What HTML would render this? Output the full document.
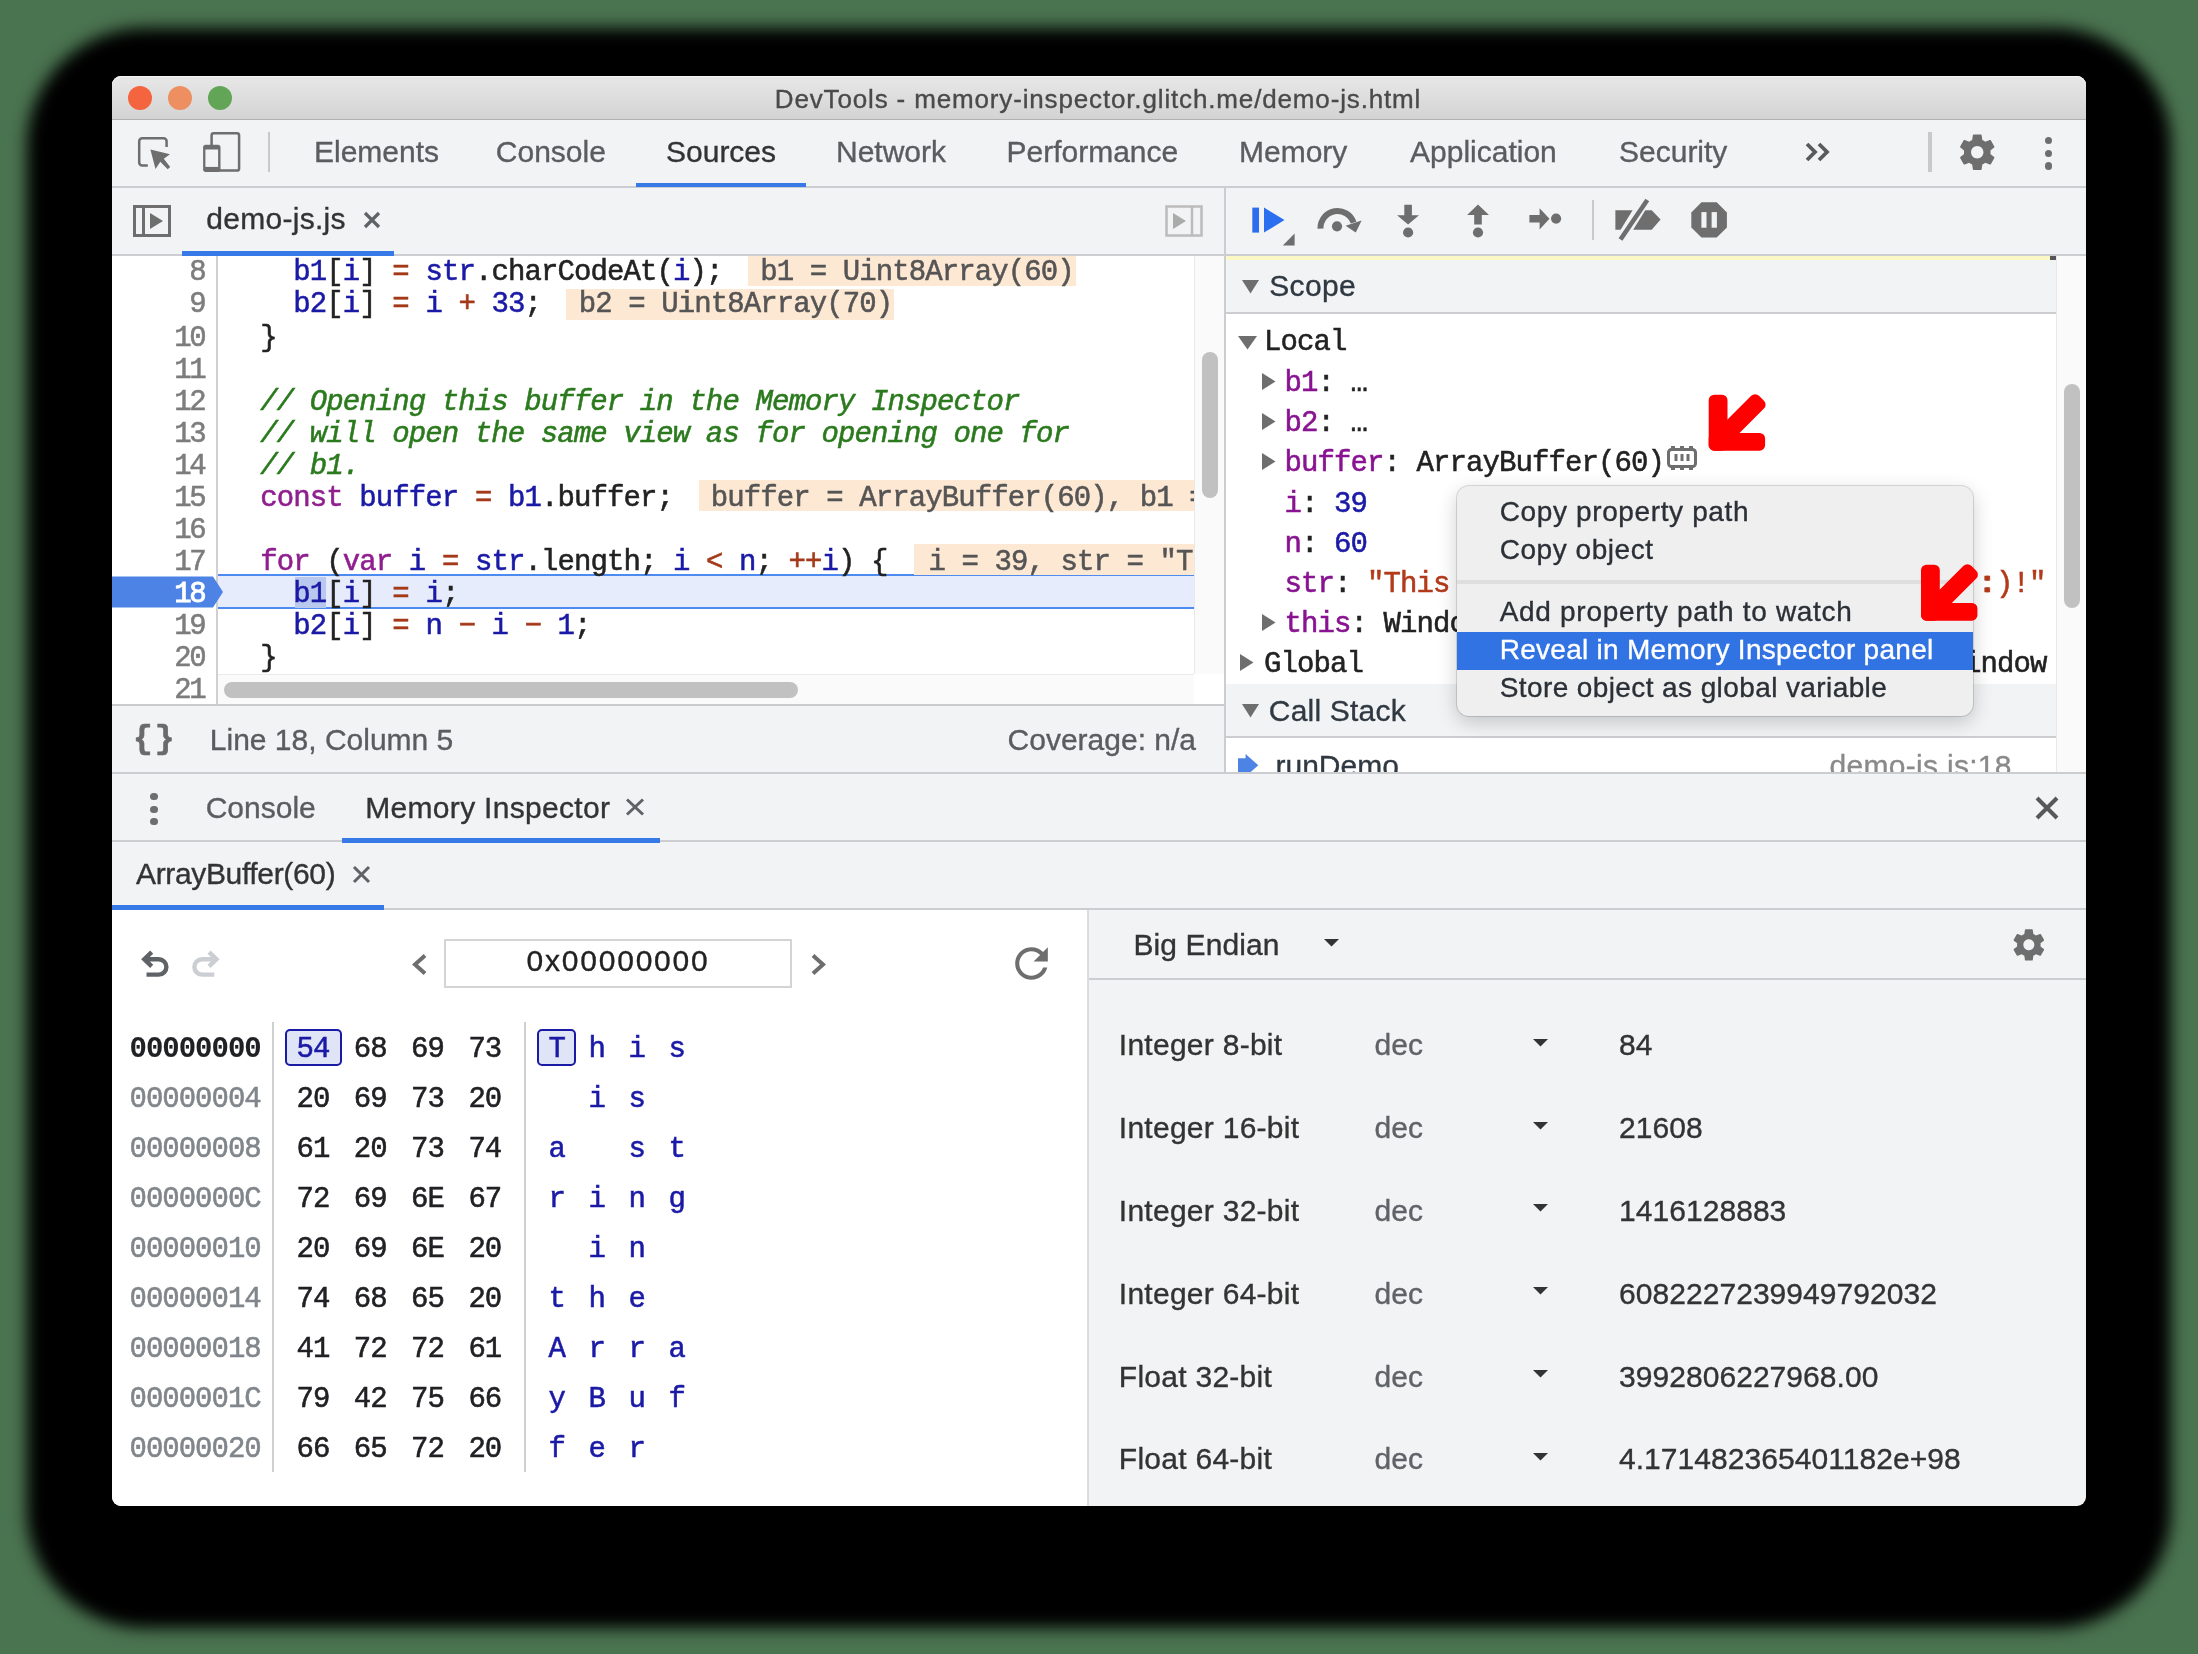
<!DOCTYPE html>
<html><head><meta charset="utf-8"><title>DevTools</title>
<style>
html,body{margin:0;padding:0;background:#4a7350;}
body{width:2198px;height:1654px;overflow:hidden;background:#4a7350;position:relative;font-family:"Liberation Sans", sans-serif;}
div,svg{position:absolute;box-sizing:border-box;}
svg{overflow:visible;}
.ts{font-family:"Liberation Sans", sans-serif;white-space:pre;-webkit-text-stroke:0.35px;}
.tm{font-family:"Liberation Mono", monospace;white-space:pre;-webkit-text-stroke:0.55px;}
</style></head><body><div id="root" style="left:0;top:0;width:2198px;height:1654px;will-change:transform;">
<div style="left:27px;top:28px;width:2144px;height:1599.5px;background:#000;border-radius:118px;filter:blur(8px);"></div>
<div style="left:112px;top:76px;width:1974px;height:1430px;background:#f1f3f4;border-radius:9px;"></div>
<div style="left:112px;top:76px;width:1974px;height:44px;border-radius:9px 9px 0 0;background:linear-gradient(#e8e8e8,#d3d3d3);border-bottom:1px solid #b0b0b0;box-shadow:inset 0 1px 0 #f4f4f4;"></div>
<div style="left:128px;top:86px;width:24px;height:24px;border-radius:50%;background:#f4643f;"></div>
<div style="left:168px;top:86px;width:24px;height:24px;border-radius:50%;background:#ed8f60;"></div>
<div style="left:208px;top:86px;width:24px;height:24px;border-radius:50%;background:#63a557;"></div>
<div class="ts" style="top:85.90px;font-size:26px;line-height:26px;color:#4a4a4a;left:0.00px;letter-spacing:0.85px;left:111px;width:1974px;text-align:center;">DevTools - memory-inspector.glitch.me/demo-js.html</div>
<div style="left:112px;top:186px;width:1974px;height:2px;background:#cbcdd1;"></div>
<svg style="left:126px;top:124px;" width="60" height="60" viewBox="0 0 60 60"><path d="M166.6 146.9V141.3a3 3 0 0 0-3-3H142.2a3 3 0 0 0-3 3v21.3a3 3 0 0 0 3 3h5.6" fill="none" stroke="#6e6e6e" stroke-width="2.5" transform="translate(-126 -124)"/><path d="M150.4 149.5L170 154.3l-6.2 4.4 6.4 8.2-2.5 2.4-7.4-7.5-4.8 7.3z" fill="#6e6e6e" transform="translate(-126 -124)"/></svg>
<svg style="left:126px;top:124px;" width="120" height="60" viewBox="0 0 120 60"><g transform="translate(-126 -124)"><rect x="211.6" y="133.2" width="27.5" height="37.4" rx="2.2" fill="none" stroke="#6e6e6e" stroke-width="2.5"/><rect x="203.1" y="144.7" width="17.4" height="27.2" rx="2.6" fill="#6e6e6e"/><rect x="205.4" y="149.5" width="12.7" height="17.4" fill="#f1f3f4"/></g></svg>
<div style="left:268px;top:132px;width:2px;height:40px;background:#c9c9c9;"></div>
<div class="ts" style="top:137.00px;font-size:30px;line-height:30px;color:#5a5c5f;left:314.00px;">Elements</div>
<div class="ts" style="top:137.00px;font-size:30px;line-height:30px;color:#5a5c5f;left:495.80px;">Console</div>
<div class="ts" style="top:137.00px;font-size:30px;line-height:30px;color:#333;left:666.00px;">Sources</div>
<div class="ts" style="top:137.00px;font-size:30px;line-height:30px;color:#5a5c5f;left:836.00px;">Network</div>
<div class="ts" style="top:137.00px;font-size:30px;line-height:30px;color:#5a5c5f;left:1006.50px;">Performance</div>
<div class="ts" style="top:137.00px;font-size:30px;line-height:30px;color:#5a5c5f;left:1239.00px;">Memory</div>
<div class="ts" style="top:137.00px;font-size:30px;line-height:30px;color:#5a5c5f;left:1410.00px;">Application</div>
<div class="ts" style="top:137.00px;font-size:30px;line-height:30px;color:#5a5c5f;left:1619.00px;">Security</div>
<div style="left:636px;top:183px;width:170px;height:4px;background:#3879e8;"></div>
<svg style="left:1804px;top:142px;" width="28" height="20" viewBox="0 0 28 20"><path d="M3 2l8 8-8 8M15 2l8 8-8 8" fill="none" stroke="#5a5a5a" stroke-width="3.8"/></svg>
<div style="left:1928.3px;top:132px;width:3.5px;height:40px;background:#c9c9c9;"></div>
<svg style="left:1955.8px;top:130.75px;" width="42.5" height="42.5" viewBox="0 0 24 24"><path d="M19.43 12.98c.04-.32.07-.64.07-.98s-.03-.66-.07-.98l2.11-1.65c.19-.15.24-.42.12-.64l-2-3.46c-.12-.22-.39-.3-.61-.22l-2.49 1c-.52-.4-1.08-.73-1.69-.98l-.38-2.65C14.46 2.18 14.25 2 14 2h-4c-.25 0-.46.18-.49.42l-.38 2.65c-.61.25-1.17.59-1.69.98l-2.49-1c-.23-.09-.49 0-.61.22l-2 3.46c-.13.22-.07.49.12.64l2.11 1.65c-.04.32-.07.65-.07.98s.03.66.07.98l-2.11 1.65c-.19.15-.24.42-.12.64l2 3.46c.12.22.39.3.61.22l2.49-1c.52.4 1.08.73 1.69.98l.38 2.65c.03.24.24.42.49.42h4c.25 0 .46-.18.49-.42l.38-2.65c.61-.25 1.17-.59 1.69-.98l2.49 1c.23.09.49 0 .61-.22l2-3.46c.12-.22.07-.49-.12-.64l-2.11-1.65zM12 15.5c-1.93 0-3.5-1.57-3.5-3.5s1.57-3.5 3.5-3.5 3.5 1.57 3.5 3.5-1.57 3.5-3.5 3.5z" fill="#6e6e6e"/></svg>
<div style="left:2044.8px;top:136.70000000000002px;width:7.4px;height:7.4px;border-radius:50%;background:#6e6e6e;"></div>
<div style="left:2044.8px;top:149.70000000000002px;width:7.4px;height:7.4px;border-radius:50%;background:#6e6e6e;"></div>
<div style="left:2044.8px;top:162.3px;width:7.4px;height:7.4px;border-radius:50%;background:#6e6e6e;"></div>
<svg style="left:133px;top:205px;" width="38" height="32" viewBox="0 0 38 32"><rect x="1.5" y="1.5" width="35" height="29" fill="none" stroke="#6e6e6e" stroke-width="3"/><path d="M10.5 1.5v29" stroke="#6e6e6e" stroke-width="3"/><path d="M17 8l13 8-13 8z" fill="#6e6e6e"/></svg>
<div class="ts" style="top:204.30px;font-size:30px;line-height:30px;color:#333;left:206.20px;letter-spacing:0.3px;">demo-js.js</div>
<svg style="left:363.5px;top:212px;" width="16" height="16" viewBox="0 0 16 16"><path d="M1 1l14 14M15 1L1 15" stroke="#5f6368" stroke-width="3.2"/></svg>
<div style="left:112px;top:254px;width:1114px;height:2px;background:#cbcdd1;"></div>
<div style="left:182px;top:251px;width:212px;height:4.6px;background:#3879e8;"></div>
<svg style="left:1165px;top:205px;" width="38" height="32" viewBox="0 0 38 32"><rect x="1.5" y="1.5" width="35" height="29" fill="none" stroke="#bcbcbc" stroke-width="2.5"/><path d="M27 1.5v29" stroke="#bcbcbc" stroke-width="2.5"/><path d="M8 8l13 8-13 8z" fill="#ababab"/></svg>
<div style="left:112px;top:256px;width:1114px;height:448px;background:#fff;overflow:hidden;">
<div style="left:104px;top:0px;width:2px;height:448px;background:#d0d0d0;"></div>
<div style="left:106px;top:318.20000000000005px;width:1000px;height:35.3px;background:#e6ecfb;border-top:2px solid #4d8bf0;border-bottom:2px solid #4d8bf0;"></div>
<div style="left:182.5px;top:320.70000000000005px;width:31.5px;height:31px;background:#b8c8ee;"></div>
<svg style="left:0;top:319px" width="114" height="34" viewBox="0 0 114 34"><path d="M0 1.5h101l10 15.5-10 15.5H0z" fill="#4d83e4"/></svg>
<div style="left:636px;top:-1.4000000000000057px;width:328px;height:31px;background:#fde8d4;"></div>
<div style="left:454px;top:32.60000000000002px;width:328px;height:31px;background:#fde8d4;"></div>
<div style="left:587px;top:224.39999999999998px;width:520px;height:31px;background:#fde8d4;"></div>
<div style="left:802px;top:288.29999999999995px;width:300px;height:31px;background:#fde8d4;"></div>
<div class="tm" style="left:77.35px;top:1.76px;font-size:29px;line-height:29px;color:#7d7d7d;letter-spacing:-2.400px;">8</div>
<div class="tm" style="left:77.35px;top:33.76px;font-size:29px;line-height:29px;color:#7d7d7d;letter-spacing:-2.400px;">9</div>
<div class="tm" style="left:62.35px;top:67.76px;font-size:29px;line-height:29px;color:#7d7d7d;letter-spacing:-2.400px;">10</div>
<div class="tm" style="left:62.35px;top:99.76px;font-size:29px;line-height:29px;color:#7d7d7d;letter-spacing:-2.400px;">11</div>
<div class="tm" style="left:62.35px;top:131.76px;font-size:29px;line-height:29px;color:#7d7d7d;letter-spacing:-2.400px;">12</div>
<div class="tm" style="left:62.35px;top:163.76px;font-size:29px;line-height:29px;color:#7d7d7d;letter-spacing:-2.400px;">13</div>
<div class="tm" style="left:62.35px;top:195.76px;font-size:29px;line-height:29px;color:#7d7d7d;letter-spacing:-2.400px;">14</div>
<div class="tm" style="left:62.35px;top:227.76px;font-size:29px;line-height:29px;color:#7d7d7d;letter-spacing:-2.400px;">15</div>
<div class="tm" style="left:62.35px;top:259.76px;font-size:29px;line-height:29px;color:#7d7d7d;letter-spacing:-2.400px;">16</div>
<div class="tm" style="left:62.35px;top:291.76px;font-size:29px;line-height:29px;color:#7d7d7d;letter-spacing:-2.400px;">17</div>
<div class="tm" style="left:62.35px;top:323.76px;font-size:29px;line-height:29px;color:#fff;letter-spacing:-2.400px;-webkit-text-stroke:0.9px;">18</div>
<div class="tm" style="left:62.35px;top:355.76px;font-size:29px;line-height:29px;color:#7d7d7d;letter-spacing:-2.400px;">19</div>
<div class="tm" style="left:62.35px;top:387.76px;font-size:29px;line-height:29px;color:#7d7d7d;letter-spacing:-2.400px;">20</div>
<div class="tm" style="left:62.35px;top:419.76px;font-size:29px;line-height:29px;color:#7d7d7d;letter-spacing:-2.400px;">21</div>
<div class="tm" style="left:181.30px;top:1.76px;font-size:29px;line-height:29px;color:#222;letter-spacing:-0.900px;"><span style="color:#1a1aa6">b1</span><span style="color:#222">[</span><span style="color:#1a1aa6">i</span><span style="color:#222">] </span><span style="color:#a53a1a">=</span><span style="color:#222"> </span><span style="color:#1a1aa6">str</span><span style="color:#222">.charCodeAt(</span><span style="color:#1a1aa6">i</span><span style="color:#222">);</span></div>
<div class="tm" style="left:648.25px;top:1.76px;font-size:29px;line-height:29px;color:#555;letter-spacing:-0.900px;">b1 = Uint8Array(60)</div>
<div class="tm" style="left:181.30px;top:33.76px;font-size:29px;line-height:29px;color:#222;letter-spacing:-0.900px;"><span style="color:#1a1aa6">b2</span><span style="color:#222">[</span><span style="color:#1a1aa6">i</span><span style="color:#222">] </span><span style="color:#a53a1a">=</span><span style="color:#222"> </span><span style="color:#1a1aa6">i</span><span style="color:#222"> </span><span style="color:#a53a1a">+</span><span style="color:#222"> </span><span style="color:#1a1aa6">33</span><span style="color:#222">;</span></div>
<div class="tm" style="left:466.75px;top:33.76px;font-size:29px;line-height:29px;color:#555;letter-spacing:-0.900px;">b2 = Uint8Array(70)</div>
<div class="tm" style="left:148.30px;top:67.76px;font-size:29px;line-height:29px;color:#222;letter-spacing:-0.900px;"><span style="color:#222">}</span></div>
<div class="tm" style="left:148.30px;top:131.76px;font-size:29px;line-height:29px;color:#2b7a1e;letter-spacing:-0.900px;font-style:italic;">// Opening this buffer in the Memory Inspector</div>
<div class="tm" style="left:148.30px;top:163.76px;font-size:29px;line-height:29px;color:#2b7a1e;letter-spacing:-0.900px;font-style:italic;">// will open the same view as for opening one for</div>
<div class="tm" style="left:148.30px;top:195.76px;font-size:29px;line-height:29px;color:#2b7a1e;letter-spacing:-0.900px;font-style:italic;">// b1.</div>
<div class="tm" style="left:148.30px;top:227.76px;font-size:29px;line-height:29px;color:#222;letter-spacing:-0.900px;"><span style="color:#8f1f8f">const</span><span style="color:#222"> </span><span style="color:#1a1aa6">buffer</span><span style="color:#222"> </span><span style="color:#a53a1a">=</span><span style="color:#222"> </span><span style="color:#1a1aa6">b1</span><span style="color:#222">.buffer;</span></div>
<div class="tm" style="left:598.75px;top:227.76px;font-size:29px;line-height:29px;color:#555;letter-spacing:-0.900px;">buffer = ArrayBuffer(60), b1 =</div>
<div class="tm" style="left:148.30px;top:291.76px;font-size:29px;line-height:29px;color:#222;letter-spacing:-0.900px;"><span style="color:#8f1f8f">for</span><span style="color:#222"> (</span><span style="color:#8f1f8f">var</span><span style="color:#222"> </span><span style="color:#1a1aa6">i</span><span style="color:#222"> </span><span style="color:#a53a1a">=</span><span style="color:#222"> </span><span style="color:#1a1aa6">str</span><span style="color:#222">.length; </span><span style="color:#1a1aa6">i</span><span style="color:#222"> </span><span style="color:#a53a1a">&lt;</span><span style="color:#222"> </span><span style="color:#1a1aa6">n</span><span style="color:#222">; </span><span style="color:#a53a1a">++</span><span style="color:#1a1aa6">i</span><span style="color:#222">) {</span></div>
<div class="tm" style="left:816.55px;top:291.76px;font-size:29px;line-height:29px;color:#555;letter-spacing:-0.900px;">i = 39, str = "This</div>
<div class="tm" style="left:181.30px;top:323.76px;font-size:29px;line-height:29px;color:#222;letter-spacing:-0.900px;"><span style="color:#1a1aa6">b1</span><span style="color:#222">[</span><span style="color:#1a1aa6">i</span><span style="color:#222">] </span><span style="color:#a53a1a">=</span><span style="color:#222"> </span><span style="color:#1a1aa6">i</span><span style="color:#222">;</span></div>
<div class="tm" style="left:181.30px;top:355.76px;font-size:29px;line-height:29px;color:#222;letter-spacing:-0.900px;"><span style="color:#1a1aa6">b2</span><span style="color:#222">[</span><span style="color:#1a1aa6">i</span><span style="color:#222">] </span><span style="color:#a53a1a">=</span><span style="color:#222"> </span><span style="color:#1a1aa6">n</span><span style="color:#222"> </span><span style="color:#a53a1a">−</span><span style="color:#222"> </span><span style="color:#1a1aa6">i</span><span style="color:#222"> </span><span style="color:#a53a1a">−</span><span style="color:#222"> </span><span style="color:#1a1aa6">1</span><span style="color:#222">;</span></div>
<div class="tm" style="left:148.30px;top:387.76px;font-size:29px;line-height:29px;color:#222;letter-spacing:-0.900px;"><span style="color:#222">}</span></div>
<div style="left:106px;top:417.5px;width:977px;height:30.5px;background:#fafafa;border-top:1px solid #ebebeb;"></div>
<div style="left:112px;top:425.5px;width:574px;height:16.5px;background:#c1c1c1;border-radius:9px;"></div>
<div style="left:1082px;top:0px;width:32px;height:448px;background:#fff;"></div>
<div style="left:1082px;top:0px;width:30px;height:417.5px;background:#fafafa;border-left:1px solid #e9e9e9;"></div>
<div style="left:1089.7px;top:96px;width:16px;height:146px;background:#c1c1c1;border-radius:8px;"></div>
</div>
<div style="left:1224px;top:188px;width:2px;height:584px;background:#cbcdd1;"></div>
<div style="left:112px;top:704px;width:1112px;height:2px;background:#c9cbcd;"></div>
<div class="tm" style="top:723.42px;font-size:33px;line-height:33px;color:#6a6a6a;left:133.00px;font-weight:bold;letter-spacing:2px;">{}</div>
<div class="ts" style="top:724.80px;font-size:30px;line-height:30px;color:#5a5c5f;left:209.80px;">Line 18, Column 5</div>
<div class="ts" style="top:724.80px;font-size:30px;line-height:30px;color:#5a5c5f;right:1002.00px;">Coverage: n/a</div>
<div style="left:1226px;top:254px;width:860px;height:2px;background:#cbcdd1;"></div>
<svg style="left:1252px;top:207px;" width="44" height="40" viewBox="0 0 44 40"><rect x="0.3" y="0.6" width="6.7" height="25" fill="#2b6ff0"/><path d="M12 0.6l20.5 12.5L12 25.6z" fill="#2b6ff0"/><path d="M42.6 26.6v11.8H30.8z" fill="#6e6e6e"/></svg>
<svg style="left:1226px;top:188px;" width="860" height="68" viewBox="0 0 860 68"><g transform="translate(-1226 -188)" fill="#6e6e6e">
<path d="M1320.5 228.6A17 17 0 0 1 1353.6 222.6" fill="none" stroke="#6e6e6e" stroke-width="6"/>
<path d="M1345.6 225.8L1361.6 220.6L1355.8 232.6z"/><circle cx="1337" cy="226.3" r="5.1"/>
<path d="M1404.3 204.7h7.6v10.6h7.1L1408.1 224.6L1397.1 215.3h7.2z"/><circle cx="1408.1" cy="232.5" r="5.1"/>
<path d="M1478 204.6L1489 215h-7.2v9.6h-7.6V215h-7.1z"/><circle cx="1478" cy="232.5" r="5.1"/>
<path d="M1529.4 214.9h10.2v-6.6L1549.5 218.8L1539.6 229.6v-7H1529.4z"/><circle cx="1556.1" cy="218.6" r="5.1"/>
<path d="M1615.4 210.2h17.2L1620.6 229.8h-5.2z"/>
<path d="M1645.3 210.2h6.4l8.9 9.2l-8.9 10.4h-18.5z"/>
<path d="M1647.3 200L1620.5 239.5" fill="none" stroke="#6e6e6e" stroke-width="4.6"/>
<path d="M1701.5 202.2h15.2l10.2 10.2v15l-10.2 10.2h-15.2l-10.2-10.2v-15z"/>
<rect x="1701.4" y="212.1" width="5.1" height="15.6" fill="#f1f3f4"/><rect x="1711.6" y="212.1" width="5.3" height="15.6" fill="#f1f3f4"/>
</g></svg>
<div style="left:1592px;top:200px;width:2px;height:40px;background:#c9c9c9;"></div>
<div style="left:1226px;top:256px;width:860px;height:516px;background:#fff;overflow:hidden;">
<div style="left:0px;top:0px;width:830px;height:4px;background:#fbf8c6;"></div>
<div style="left:824px;top:0px;width:6px;height:5px;background:#555;"></div>
<div style="left:0px;top:4px;width:830px;height:52px;background:#f1f3f4;"></div>
<div style="left:0px;top:56px;width:830px;height:2px;background:#cbcdd1;"></div>
<svg style="left:15.700000000000045px;top:24px" width="17" height="13.5" viewBox="0 0 17 13.5"><path d="M0 0h17L8.5 13.5z" fill="#6e6e6e"/></svg>
<div class="ts" style="top:14.90px;font-size:30px;line-height:30px;color:#303942;left:43.30px;letter-spacing:0.3px;">Scope</div>
<svg style="left:12.299999999999955px;top:79.69999999999999px" width="19" height="13.5" viewBox="0 0 19 13.5"><path d="M0 0h19L9.5 13.5z" fill="#6e6e6e"/></svg>
<div class="tm" style="left:38.00px;top:71.96px;font-size:29px;line-height:29px;color:#222;letter-spacing:-0.900px;">Local</div>
<svg style="left:35.5px;top:116.5px" width="13.5" height="17" viewBox="0 0 13.5 17"><path d="M0 0v17L13.5 8.5z" fill="#6e6e6e"/></svg>
<div class="tm" style="left:58.50px;top:112.96px;font-size:29px;line-height:29px;color:#222;letter-spacing:-0.900px;"><span style="color:#881391">b1</span><span style="color:#222">: …</span></div>
<svg style="left:35.5px;top:156.5px" width="13.5" height="17" viewBox="0 0 13.5 17"><path d="M0 0v17L13.5 8.5z" fill="#6e6e6e"/></svg>
<div class="tm" style="left:58.50px;top:152.96px;font-size:29px;line-height:29px;color:#222;letter-spacing:-0.900px;"><span style="color:#881391">b2</span><span style="color:#222">: …</span></div>
<svg style="left:35.5px;top:197.0px" width="13.5" height="17" viewBox="0 0 13.5 17"><path d="M0 0v17L13.5 8.5z" fill="#6e6e6e"/></svg>
<div class="tm" style="left:58.50px;top:193.46px;font-size:29px;line-height:29px;color:#222;letter-spacing:-0.900px;"><span style="color:#881391">buffer</span><span style="color:#222">: ArrayBuffer(60)</span></div>
<svg style="left:441px;top:190px" width="30" height="24" viewBox="0 0 30 24"><rect x="1.5" y="3.5" width="27" height="17" rx="3" fill="none" stroke="#6e6e6e" stroke-width="3"/><path d="M9 8v7M15 8v7M21 8v7" stroke="#6e6e6e" stroke-width="3"/><path d="M6 0v3M24 0v3M6 21v3M24 21v3M15 0v3M15 21v3" stroke="#6e6e6e" stroke-width="4"/></svg>
<div class="tm" style="left:58.50px;top:233.96px;font-size:29px;line-height:29px;color:#222;letter-spacing:-0.900px;"><span style="color:#881391">i</span><span style="color:#222">: </span><span style="color:#1a1aa6">39</span></div>
<div class="tm" style="left:58.50px;top:273.96px;font-size:29px;line-height:29px;color:#222;letter-spacing:-0.900px;"><span style="color:#881391">n</span><span style="color:#222">: </span><span style="color:#1a1aa6">60</span></div>
<div class="tm" style="left:58.50px;top:313.96px;font-size:29px;line-height:29px;color:#222;letter-spacing:-0.900px;"><span style="color:#881391">str</span><span style="color:#222">: </span><span style="color:#b23a1a">"This is a string in the ArrayBuffer :)!"</span></div>
<div style="left:764px;top:309px;width:66px;height:40px;background:#fff;"></div>
<div class="tm" style="left:753.50px;top:313.96px;font-size:29px;line-height:29px;color:#b23a1a;letter-spacing:-0.900px;">:)!"</div>
<svg style="left:35.5px;top:357.5px" width="13.5" height="17" viewBox="0 0 13.5 17"><path d="M0 0v17L13.5 8.5z" fill="#6e6e6e"/></svg>
<div class="tm" style="left:58.50px;top:353.96px;font-size:29px;line-height:29px;color:#222;letter-spacing:-0.900px;"><span style="color:#881391">this</span><span style="color:#222">: Window</span></div>
<svg style="left:14px;top:397.5px" width="13.5" height="17" viewBox="0 0 13.5 17"><path d="M0 0v17L13.5 8.5z" fill="#6e6e6e"/></svg>
<div class="tm" style="left:38.00px;top:393.96px;font-size:29px;line-height:29px;color:#222;letter-spacing:-0.900px;">Global</div>
<div class="tm" style="left:721.50px;top:393.96px;font-size:29px;line-height:29px;color:#222;letter-spacing:-0.900px;">Window</div>
<div style="left:0px;top:428px;width:830px;height:52px;background:#f1f3f4;"></div>
<div style="left:0px;top:480px;width:830px;height:2px;background:#cbcdd1;"></div>
<svg style="left:15.700000000000045px;top:448px" width="17" height="13.5" viewBox="0 0 17 13.5"><path d="M0 0h17L8.5 13.5z" fill="#6e6e6e"/></svg>
<div class="ts" style="top:439.50px;font-size:30px;line-height:30px;color:#303942;left:42.80px;letter-spacing:0.2px;">Call Stack</div>
<svg style="left:0;top:0" width="860" height="516" viewBox="1226 256 860 516"><path d="M1238 758.2H1245.6V754.1L1258.3 765.3L1245.6 776.5V772.4H1238z" fill="#4d83e4"/></svg>
<div class="ts" style="top:494.60px;font-size:30px;line-height:30px;color:#303942;left:49.50px;">runDemo</div>
<div class="ts" style="top:494.60px;font-size:30px;line-height:30px;color:#8a8a8a;left:603.50px;letter-spacing:0.3px;">demo-js.js:18</div>
<div style="left:830px;top:0px;width:30px;height:516px;background:#fafafa;border-left:1px solid #e9e9e9;"></div>
<div style="left:838px;top:128.3px;width:16px;height:223.4px;background:#c1c1c1;border-radius:8px;"></div>
</div>
<div style="left:112px;top:772px;width:1974px;height:2px;background:#cbcdd1;"></div>
<div style="left:150.3px;top:792.8px;width:7.4px;height:7.4px;border-radius:50%;background:#6e6e6e;"></div>
<div style="left:150.3px;top:805.5px;width:7.4px;height:7.4px;border-radius:50%;background:#6e6e6e;"></div>
<div style="left:150.3px;top:818.0999999999999px;width:7.4px;height:7.4px;border-radius:50%;background:#6e6e6e;"></div>
<div class="ts" style="top:792.90px;font-size:30px;line-height:30px;color:#5a5c5f;left:205.70px;">Console</div>
<div class="ts" style="top:792.90px;font-size:30px;line-height:30px;color:#333;left:365.30px;letter-spacing:0.3px;">Memory Inspector</div>
<svg style="left:626px;top:799px;" width="18" height="16" viewBox="0 0 18 16"><path d="M1 0.5l16 15M17 0.5L1 15.5" stroke="#5f6368" stroke-width="3"/></svg>
<div style="left:112px;top:840px;width:1974px;height:2px;background:#cbcdd1;"></div>
<div style="left:342px;top:838px;width:318px;height:5px;background:#3879e8;"></div>
<svg style="left:2036px;top:797px;" width="22" height="22" viewBox="0 0 22 22"><path d="M1 1l20 20M21 1L1 21" stroke="#585858" stroke-width="4"/></svg>
<div class="ts" style="top:858.90px;font-size:30px;line-height:30px;color:#333;left:136.00px;letter-spacing:-0.35px;">ArrayBuffer(60)</div>
<svg style="left:353px;top:866px;" width="17" height="17" viewBox="0 0 17 17"><path d="M1 1l15 15M16 1L1 16" stroke="#5f6368" stroke-width="3"/></svg>
<div style="left:112px;top:908px;width:1974px;height:2px;background:#cbcdd1;"></div>
<div style="left:112px;top:905px;width:272px;height:5px;background:#3879e8;"></div>
<div style="left:112px;top:910px;width:975px;height:596px;background:#fff;border-radius:0 0 0 9px;"></div>
<div style="left:1087px;top:910px;width:2px;height:596px;background:#dadce0;"></div>
<svg style="left:126px;top:930px;" width="120" height="70" viewBox="0 0 120 70"><g transform="translate(-126 -930)" fill="none" stroke-width="4.4"><path d="M151.7 952.1L144.3 959.2L151.7 966.3M144.3 959.2H158.7A7.7 7.7 0 0 1 158.7 974.6H146.5" stroke="#5f6368"/><path d="M209.05 952.1L216.45 959.2L209.05 966.3M216.45 959.2H202.05A7.7 7.7 0 0 0 202.05 974.6H214.25" stroke="#cbced2"/></g></svg>
<svg style="left:411px;top:954px;" width="17" height="21" viewBox="0 0 17 21"><path d="M14 1.5L4 10.5l10 9" fill="none" stroke="#6e6e6e" stroke-width="4"/></svg>
<svg style="left:810px;top:954px;" width="17" height="21" viewBox="0 0 17 21"><path d="M3 1.5l10 9-10 9" fill="none" stroke="#6e6e6e" stroke-width="4"/></svg>
<div style="left:444px;top:938.5px;width:348px;height:49px;background:#fff;border:2px solid #d4d4d4;"></div>
<div class="ts" style="top:946.10px;font-size:30px;line-height:30px;color:#222;left:0.00px;letter-spacing:1.8px;left:444px;width:348px;text-align:center;">0x00000000</div>
<svg style="left:1007px;top:939px;" width="49" height="49" viewBox="0 0 24 24"><path d="M17.65 6.35C16.2 4.9 14.21 4 12 4c-4.42 0-7.99 3.58-7.99 8s3.57 8 7.99 8c3.73 0 6.84-2.55 7.73-6h-2.08c-.82 2.33-3.04 4-5.65 4-3.31 0-6-2.69-6-6s2.69-6 6-6c1.66 0 3.14.69 4.22 1.78L13 11h7V4l-2.35 2.35z" fill="#6e6e6e"/></svg>
<div style="left:272px;top:1022px;width:2px;height:450px;background:#cfd0d3;"></div>
<div style="left:524px;top:1022px;width:2px;height:450px;background:#cfd0d3;"></div>
<div style="left:284.5px;top:1028.5px;width:57px;height:37px;background:#dfe5f7;border:2px solid #1a1aa6;border-radius:5px;"></div>
<div style="left:536.5px;top:1028.5px;width:39px;height:37px;background:#dfe5f7;border:2px solid #1a1aa6;border-radius:5px;"></div>
<div class="tm" style="left:129.50px;top:1035.26px;font-size:29px;line-height:29px;color:#202124;letter-spacing:-1.000px;font-weight:bold;-webkit-text-stroke:0.1px;">00000000</div>
<div class="tm" style="left:296.50px;top:1035.26px;font-size:29px;line-height:29px;color:#1a1aa6;letter-spacing:-1.000px;">54</div>
<div class="tm" style="left:353.80px;top:1035.26px;font-size:29px;line-height:29px;color:#202124;letter-spacing:-1.000px;">68</div>
<div class="tm" style="left:411.10px;top:1035.26px;font-size:29px;line-height:29px;color:#202124;letter-spacing:-1.000px;">69</div>
<div class="tm" style="left:468.40px;top:1035.26px;font-size:29px;line-height:29px;color:#202124;letter-spacing:-1.000px;">73</div>
<div class="tm" style="left:548.50px;top:1035.26px;font-size:29px;line-height:29px;color:#1a1aa6;letter-spacing:-1.000px;">T</div>
<div class="tm" style="left:588.50px;top:1035.26px;font-size:29px;line-height:29px;color:#1a1aa6;letter-spacing:-1.000px;">h</div>
<div class="tm" style="left:628.50px;top:1035.26px;font-size:29px;line-height:29px;color:#1a1aa6;letter-spacing:-1.000px;">i</div>
<div class="tm" style="left:668.50px;top:1035.26px;font-size:29px;line-height:29px;color:#1a1aa6;letter-spacing:-1.000px;">s</div>
<div class="tm" style="left:129.50px;top:1085.26px;font-size:29px;line-height:29px;color:#80868b;letter-spacing:-1.000px;">00000004</div>
<div class="tm" style="left:296.50px;top:1085.26px;font-size:29px;line-height:29px;color:#202124;letter-spacing:-1.000px;">20</div>
<div class="tm" style="left:353.80px;top:1085.26px;font-size:29px;line-height:29px;color:#202124;letter-spacing:-1.000px;">69</div>
<div class="tm" style="left:411.10px;top:1085.26px;font-size:29px;line-height:29px;color:#202124;letter-spacing:-1.000px;">73</div>
<div class="tm" style="left:468.40px;top:1085.26px;font-size:29px;line-height:29px;color:#202124;letter-spacing:-1.000px;">20</div>
<div class="tm" style="left:588.50px;top:1085.26px;font-size:29px;line-height:29px;color:#1a1aa6;letter-spacing:-1.000px;">i</div>
<div class="tm" style="left:628.50px;top:1085.26px;font-size:29px;line-height:29px;color:#1a1aa6;letter-spacing:-1.000px;">s</div>
<div class="tm" style="left:129.50px;top:1135.46px;font-size:29px;line-height:29px;color:#80868b;letter-spacing:-1.000px;">00000008</div>
<div class="tm" style="left:296.50px;top:1135.46px;font-size:29px;line-height:29px;color:#202124;letter-spacing:-1.000px;">61</div>
<div class="tm" style="left:353.80px;top:1135.46px;font-size:29px;line-height:29px;color:#202124;letter-spacing:-1.000px;">20</div>
<div class="tm" style="left:411.10px;top:1135.46px;font-size:29px;line-height:29px;color:#202124;letter-spacing:-1.000px;">73</div>
<div class="tm" style="left:468.40px;top:1135.46px;font-size:29px;line-height:29px;color:#202124;letter-spacing:-1.000px;">74</div>
<div class="tm" style="left:548.50px;top:1135.46px;font-size:29px;line-height:29px;color:#1a1aa6;letter-spacing:-1.000px;">a</div>
<div class="tm" style="left:628.50px;top:1135.46px;font-size:29px;line-height:29px;color:#1a1aa6;letter-spacing:-1.000px;">s</div>
<div class="tm" style="left:668.50px;top:1135.46px;font-size:29px;line-height:29px;color:#1a1aa6;letter-spacing:-1.000px;">t</div>
<div class="tm" style="left:129.50px;top:1185.46px;font-size:29px;line-height:29px;color:#80868b;letter-spacing:-1.000px;">0000000C</div>
<div class="tm" style="left:296.50px;top:1185.46px;font-size:29px;line-height:29px;color:#202124;letter-spacing:-1.000px;">72</div>
<div class="tm" style="left:353.80px;top:1185.46px;font-size:29px;line-height:29px;color:#202124;letter-spacing:-1.000px;">69</div>
<div class="tm" style="left:411.10px;top:1185.46px;font-size:29px;line-height:29px;color:#202124;letter-spacing:-1.000px;">6E</div>
<div class="tm" style="left:468.40px;top:1185.46px;font-size:29px;line-height:29px;color:#202124;letter-spacing:-1.000px;">67</div>
<div class="tm" style="left:548.50px;top:1185.46px;font-size:29px;line-height:29px;color:#1a1aa6;letter-spacing:-1.000px;">r</div>
<div class="tm" style="left:588.50px;top:1185.46px;font-size:29px;line-height:29px;color:#1a1aa6;letter-spacing:-1.000px;">i</div>
<div class="tm" style="left:628.50px;top:1185.46px;font-size:29px;line-height:29px;color:#1a1aa6;letter-spacing:-1.000px;">n</div>
<div class="tm" style="left:668.50px;top:1185.46px;font-size:29px;line-height:29px;color:#1a1aa6;letter-spacing:-1.000px;">g</div>
<div class="tm" style="left:129.50px;top:1235.36px;font-size:29px;line-height:29px;color:#80868b;letter-spacing:-1.000px;">00000010</div>
<div class="tm" style="left:296.50px;top:1235.36px;font-size:29px;line-height:29px;color:#202124;letter-spacing:-1.000px;">20</div>
<div class="tm" style="left:353.80px;top:1235.36px;font-size:29px;line-height:29px;color:#202124;letter-spacing:-1.000px;">69</div>
<div class="tm" style="left:411.10px;top:1235.36px;font-size:29px;line-height:29px;color:#202124;letter-spacing:-1.000px;">6E</div>
<div class="tm" style="left:468.40px;top:1235.36px;font-size:29px;line-height:29px;color:#202124;letter-spacing:-1.000px;">20</div>
<div class="tm" style="left:588.50px;top:1235.36px;font-size:29px;line-height:29px;color:#1a1aa6;letter-spacing:-1.000px;">i</div>
<div class="tm" style="left:628.50px;top:1235.36px;font-size:29px;line-height:29px;color:#1a1aa6;letter-spacing:-1.000px;">n</div>
<div class="tm" style="left:129.50px;top:1285.36px;font-size:29px;line-height:29px;color:#80868b;letter-spacing:-1.000px;">00000014</div>
<div class="tm" style="left:296.50px;top:1285.36px;font-size:29px;line-height:29px;color:#202124;letter-spacing:-1.000px;">74</div>
<div class="tm" style="left:353.80px;top:1285.36px;font-size:29px;line-height:29px;color:#202124;letter-spacing:-1.000px;">68</div>
<div class="tm" style="left:411.10px;top:1285.36px;font-size:29px;line-height:29px;color:#202124;letter-spacing:-1.000px;">65</div>
<div class="tm" style="left:468.40px;top:1285.36px;font-size:29px;line-height:29px;color:#202124;letter-spacing:-1.000px;">20</div>
<div class="tm" style="left:548.50px;top:1285.36px;font-size:29px;line-height:29px;color:#1a1aa6;letter-spacing:-1.000px;">t</div>
<div class="tm" style="left:588.50px;top:1285.36px;font-size:29px;line-height:29px;color:#1a1aa6;letter-spacing:-1.000px;">h</div>
<div class="tm" style="left:628.50px;top:1285.36px;font-size:29px;line-height:29px;color:#1a1aa6;letter-spacing:-1.000px;">e</div>
<div class="tm" style="left:129.50px;top:1335.36px;font-size:29px;line-height:29px;color:#80868b;letter-spacing:-1.000px;">00000018</div>
<div class="tm" style="left:296.50px;top:1335.36px;font-size:29px;line-height:29px;color:#202124;letter-spacing:-1.000px;">41</div>
<div class="tm" style="left:353.80px;top:1335.36px;font-size:29px;line-height:29px;color:#202124;letter-spacing:-1.000px;">72</div>
<div class="tm" style="left:411.10px;top:1335.36px;font-size:29px;line-height:29px;color:#202124;letter-spacing:-1.000px;">72</div>
<div class="tm" style="left:468.40px;top:1335.36px;font-size:29px;line-height:29px;color:#202124;letter-spacing:-1.000px;">61</div>
<div class="tm" style="left:548.50px;top:1335.36px;font-size:29px;line-height:29px;color:#1a1aa6;letter-spacing:-1.000px;">A</div>
<div class="tm" style="left:588.50px;top:1335.36px;font-size:29px;line-height:29px;color:#1a1aa6;letter-spacing:-1.000px;">r</div>
<div class="tm" style="left:628.50px;top:1335.36px;font-size:29px;line-height:29px;color:#1a1aa6;letter-spacing:-1.000px;">r</div>
<div class="tm" style="left:668.50px;top:1335.36px;font-size:29px;line-height:29px;color:#1a1aa6;letter-spacing:-1.000px;">a</div>
<div class="tm" style="left:129.50px;top:1385.36px;font-size:29px;line-height:29px;color:#80868b;letter-spacing:-1.000px;">0000001C</div>
<div class="tm" style="left:296.50px;top:1385.36px;font-size:29px;line-height:29px;color:#202124;letter-spacing:-1.000px;">79</div>
<div class="tm" style="left:353.80px;top:1385.36px;font-size:29px;line-height:29px;color:#202124;letter-spacing:-1.000px;">42</div>
<div class="tm" style="left:411.10px;top:1385.36px;font-size:29px;line-height:29px;color:#202124;letter-spacing:-1.000px;">75</div>
<div class="tm" style="left:468.40px;top:1385.36px;font-size:29px;line-height:29px;color:#202124;letter-spacing:-1.000px;">66</div>
<div class="tm" style="left:548.50px;top:1385.36px;font-size:29px;line-height:29px;color:#1a1aa6;letter-spacing:-1.000px;">y</div>
<div class="tm" style="left:588.50px;top:1385.36px;font-size:29px;line-height:29px;color:#1a1aa6;letter-spacing:-1.000px;">B</div>
<div class="tm" style="left:628.50px;top:1385.36px;font-size:29px;line-height:29px;color:#1a1aa6;letter-spacing:-1.000px;">u</div>
<div class="tm" style="left:668.50px;top:1385.36px;font-size:29px;line-height:29px;color:#1a1aa6;letter-spacing:-1.000px;">f</div>
<div class="tm" style="left:129.50px;top:1435.36px;font-size:29px;line-height:29px;color:#80868b;letter-spacing:-1.000px;">00000020</div>
<div class="tm" style="left:296.50px;top:1435.36px;font-size:29px;line-height:29px;color:#202124;letter-spacing:-1.000px;">66</div>
<div class="tm" style="left:353.80px;top:1435.36px;font-size:29px;line-height:29px;color:#202124;letter-spacing:-1.000px;">65</div>
<div class="tm" style="left:411.10px;top:1435.36px;font-size:29px;line-height:29px;color:#202124;letter-spacing:-1.000px;">72</div>
<div class="tm" style="left:468.40px;top:1435.36px;font-size:29px;line-height:29px;color:#202124;letter-spacing:-1.000px;">20</div>
<div class="tm" style="left:548.50px;top:1435.36px;font-size:29px;line-height:29px;color:#1a1aa6;letter-spacing:-1.000px;">f</div>
<div class="tm" style="left:588.50px;top:1435.36px;font-size:29px;line-height:29px;color:#1a1aa6;letter-spacing:-1.000px;">e</div>
<div class="tm" style="left:628.50px;top:1435.36px;font-size:29px;line-height:29px;color:#1a1aa6;letter-spacing:-1.000px;">r</div>
<div style="left:1089px;top:978px;width:997px;height:2px;background:#cbcdd1;"></div>
<div class="ts" style="top:930.00px;font-size:30px;line-height:30px;color:#333;left:1133.50px;letter-spacing:0.1px;">Big Endian</div>
<svg style="left:1324.2px;top:939.3px;" width="15" height="7.6" viewBox="0 0 15 7.6"><path d="M0 0h15L7.5 7.6z" fill="#333"/></svg>
<svg style="left:2010.45px;top:925.65px;" width="37.7" height="37.7" viewBox="0 0 24 24"><path d="M19.43 12.98c.04-.32.07-.64.07-.98s-.03-.66-.07-.98l2.11-1.65c.19-.15.24-.42.12-.64l-2-3.46c-.12-.22-.39-.3-.61-.22l-2.49 1c-.52-.4-1.08-.73-1.69-.98l-.38-2.65C14.46 2.18 14.25 2 14 2h-4c-.25 0-.46.18-.49.42l-.38 2.65c-.61.25-1.17.59-1.69.98l-2.49-1c-.23-.09-.49 0-.61.22l-2 3.46c-.13.22-.07.49.12.64l2.11 1.65c-.04.32-.07.65-.07.98s.03.66.07.98l-2.11 1.65c-.19.15-.24.42-.12.64l2 3.46c.12.22.39.3.61.22l2.49-1c.52.4 1.08.73 1.69.98l.38 2.65c.03.24.24.42.49.42h4c.25 0 .46-.18.49-.42l.38-2.65c.61-.25 1.17-.59 1.69-.98l2.49 1c.23.09.49 0 .61-.22l2-3.46c.12-.22.07-.49-.12-.64l-2.11-1.65zM12 15.5c-1.93 0-3.5-1.57-3.5-3.5s1.57-3.5 3.5-3.5 3.5 1.57 3.5 3.5-1.57 3.5-3.5 3.5z" fill="#6e6e6e"/></svg>
<div class="ts" style="top:1030.30px;font-size:30px;line-height:30px;color:#333;left:1118.80px;letter-spacing:0.27px;">Integer 8-bit</div>
<div class="ts" style="top:1030.30px;font-size:30px;line-height:30px;color:#5f6368;left:1374.60px;">dec</div>
<svg style="left:1533px;top:1038.8px;" width="15" height="7.6" viewBox="0 0 15 7.6"><path d="M0 0h15L7.5 7.6z" fill="#333"/></svg>
<div class="ts" style="top:1030.30px;font-size:30px;line-height:30px;color:#333;left:1619.00px;letter-spacing:0.05px;">84</div>
<div class="ts" style="top:1113.10px;font-size:30px;line-height:30px;color:#333;left:1118.80px;letter-spacing:0.27px;">Integer 16-bit</div>
<div class="ts" style="top:1113.10px;font-size:30px;line-height:30px;color:#5f6368;left:1374.60px;">dec</div>
<svg style="left:1533px;top:1121.6px;" width="15" height="7.6" viewBox="0 0 15 7.6"><path d="M0 0h15L7.5 7.6z" fill="#333"/></svg>
<div class="ts" style="top:1113.10px;font-size:30px;line-height:30px;color:#333;left:1619.00px;letter-spacing:0.05px;">21608</div>
<div class="ts" style="top:1195.90px;font-size:30px;line-height:30px;color:#333;left:1118.80px;letter-spacing:0.27px;">Integer 32-bit</div>
<div class="ts" style="top:1195.90px;font-size:30px;line-height:30px;color:#5f6368;left:1374.60px;">dec</div>
<svg style="left:1533px;top:1204.4px;" width="15" height="7.6" viewBox="0 0 15 7.6"><path d="M0 0h15L7.5 7.6z" fill="#333"/></svg>
<div class="ts" style="top:1195.90px;font-size:30px;line-height:30px;color:#333;left:1619.00px;letter-spacing:0.05px;">1416128883</div>
<div class="ts" style="top:1278.80px;font-size:30px;line-height:30px;color:#333;left:1118.80px;letter-spacing:0.27px;">Integer 64-bit</div>
<div class="ts" style="top:1278.80px;font-size:30px;line-height:30px;color:#5f6368;left:1374.60px;">dec</div>
<svg style="left:1533px;top:1287.3px;" width="15" height="7.6" viewBox="0 0 15 7.6"><path d="M0 0h15L7.5 7.6z" fill="#333"/></svg>
<div class="ts" style="top:1278.80px;font-size:30px;line-height:30px;color:#333;left:1619.00px;letter-spacing:0.05px;">6082227239949792032</div>
<div class="ts" style="top:1361.60px;font-size:30px;line-height:30px;color:#333;left:1118.80px;letter-spacing:0.27px;">Float 32-bit</div>
<div class="ts" style="top:1361.60px;font-size:30px;line-height:30px;color:#5f6368;left:1374.60px;">dec</div>
<svg style="left:1533px;top:1370.1px;" width="15" height="7.6" viewBox="0 0 15 7.6"><path d="M0 0h15L7.5 7.6z" fill="#333"/></svg>
<div class="ts" style="top:1361.60px;font-size:30px;line-height:30px;color:#333;left:1619.00px;letter-spacing:0.05px;">3992806227968.00</div>
<div class="ts" style="top:1444.40px;font-size:30px;line-height:30px;color:#333;left:1118.80px;letter-spacing:0.27px;">Float 64-bit</div>
<div class="ts" style="top:1444.40px;font-size:30px;line-height:30px;color:#5f6368;left:1374.60px;">dec</div>
<svg style="left:1533px;top:1452.9px;" width="15" height="7.6" viewBox="0 0 15 7.6"><path d="M0 0h15L7.5 7.6z" fill="#333"/></svg>
<div class="ts" style="top:1444.40px;font-size:30px;line-height:30px;color:#333;left:1619.00px;letter-spacing:0.05px;">4.171482365401182e+98</div>
<div style="left:1457px;top:486px;width:515.8px;height:229.5px;background:#efefef;border-radius:12px;box-shadow:0 0 0 1px rgba(0,0,0,.13),0 6px 20px rgba(0,0,0,.2);"></div>
<div class="ts" style="top:497.80px;font-size:28px;line-height:28px;color:#2b3037;left:1499.70px;letter-spacing:0.63px;">Copy property path</div>
<div class="ts" style="top:536.20px;font-size:28px;line-height:28px;color:#2b3037;left:1499.70px;letter-spacing:0.54px;">Copy object</div>
<div style="left:1457px;top:580px;width:515.8px;height:3.6px;background:#dedede;"></div>
<div class="ts" style="top:598.20px;font-size:28px;line-height:28px;color:#2b3037;left:1499.70px;letter-spacing:0.7px;">Add property path to watch</div>
<div style="left:1457px;top:632px;width:515.8px;height:37.6px;background:#3273e3;"></div>
<div class="ts" style="top:635.60px;font-size:28px;line-height:28px;color:#fff;left:1499.70px;letter-spacing:0.28px;">Reveal in Memory Inspector panel</div>
<div class="ts" style="top:674.20px;font-size:28px;line-height:28px;color:#2b3037;left:1499.70px;letter-spacing:0.4px;">Store object as global variable</div>
<svg style="left:0px;top:0px;pointer-events:none;" width="2198" height="1654" viewBox="0 0 2198 1654"><g transform="translate(0 0)" fill="#ff0000"><rect x="1708.7" y="394.7" width="18.8" height="56" rx="5.5"/><rect x="1708.7" y="433" width="56.4" height="17.7" rx="5.5"/><rect x="0" y="-9" width="61.5" height="18" rx="5.5" transform="translate(1718 441.8) rotate(-45)"/></g></svg>
<svg style="left:0px;top:0px;pointer-events:none;" width="2198" height="1654" viewBox="0 0 2198 1654"><g transform="translate(212.3 170)" fill="#ff0000"><rect x="1708.7" y="394.7" width="18.8" height="56" rx="5.5"/><rect x="1708.7" y="433" width="56.4" height="17.7" rx="5.5"/><rect x="0" y="-9" width="61.5" height="18" rx="5.5" transform="translate(1718 441.8) rotate(-45)"/></g></svg>
</div></body></html>
